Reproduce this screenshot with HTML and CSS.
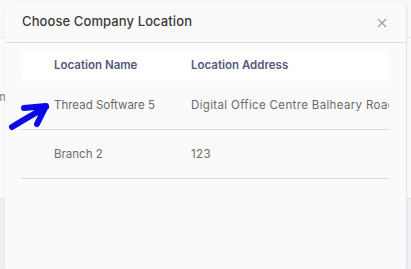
FILE: index.html
```html
<!DOCTYPE html>
<html lang="en">

<head>
    <meta charset="UTF-8">
    <meta name="viewport" content="width=device-width, initial-scale=1.0">
    <title>Choose Company Location</title>
    <link rel="stylesheet" href="styles.css">
</head>

<body>
    <!-- page behind the modal -->
    <div class="page">
        <div class="page-top"></div>
        <div class="page-card">
            <span class="page-letter">m</span>
        </div>
    </div>

    <div class="modal">
        <div class="modal-header">
            <h2>Choose Company Location</h2>
            <svg class="close" width="10" height="10" viewBox="0 0 10 10">
                <path d="M1 1 L9 9 M9 1 L1 9" stroke="#9a9a9a" stroke-width="1.1" fill="none"/>
            </svg>
        </div>
        <div class="modal-body">
            <div class="table">
                <div class="table-head">
                    <div class="col-name">Location Name</div>
                    <div class="col-address">Location Address</div>
                </div>
                <div class="table-row">
                    <div class="col-name">Thread Software 5</div>
                    <div class="col-address">Digital Office Centre Balheary Road</div>
                </div>
                <div class="table-row">
                    <div class="col-name">Branch 2</div>
                    <div class="col-address">123</div>
                </div>
            </div>
        </div>
    </div>

    <!-- hand drawn arrow -->
    <svg class="arrow" width="50" height="40" viewBox="0 0 50 40">
        <path d="M7 28 C 18 21, 29 15, 41 8 M 19 9 L 41 7 L 32 25" fill="none" stroke="#0a0ae8" stroke-width="6" stroke-linecap="round" stroke-linejoin="round"/>
    </svg>
</body>

</html>
```

FILE: styles.css
```css
body {
    margin: 0;
    width: 411px;
    height: 269px;
    overflow: hidden;
    position: relative;
    background: #eef0f3;
    font-family: "Inter", "Open Sans", sans-serif;
}

.page-top {
    height: 37px;
    background: #f9f9f9;
    border-bottom: 1px solid #e6e6ea;
}

.page-card {
    height: 160px;
    background: #fbfbfb;
    border-bottom: 1px solid #e2e2e6;
    position: relative;
}

.page-letter {
    position: absolute;
    left: -4px;
    top: 52px;
    font-size: 11px;
    color: #8a6aa8;
}

.modal {
    position: absolute;
    left: 5px;
    top: 3px;
    width: 401px;
    height: 266px;
    overflow: hidden;
    background: #fafafa;
    border-radius: 6px 6px 0 0;
    border-right: 1px solid #e4e4e8;
    box-shadow: 0 0 3px rgba(0, 0, 0, 0.06);
}

.modal-header {
    display: flex;
    align-items: center;
    justify-content: space-between;
    height: 39px;
    padding: 0 19px 0 17px;
    border-bottom: 1px solid #dcdaec;
}

.modal-header h2 {
    margin: 0 0 3px;
    font-size: 13px;
    font-weight: 500;
    color: #3a3a3a;
    letter-spacing: 0.1px;
}

.modal-body {
    padding: 6px 17px 0 16px;
}

.table {
    font-size: 11.5px;
}

.table-head,
.table-row {
    display: flex;
    align-items: center;
    padding-left: 33px;
    overflow: hidden;
    white-space: nowrap;
}

.table-head {
    height: 32px;
    background: #ffffff;
    border-radius: 4px;
    font-weight: 600;
    color: #55587a;
}

.table-row {
    height: 48px;
    color: #6a6a6a;
    border-bottom: 1px solid #d8d6ea;
}

.table-row .col-address {
    letter-spacing: 0.35px;
}

.col-name {
    width: 137px;
    flex: none;
}

.arrow {
    position: absolute;
    left: 5px;
    top: 99px;
}
```
